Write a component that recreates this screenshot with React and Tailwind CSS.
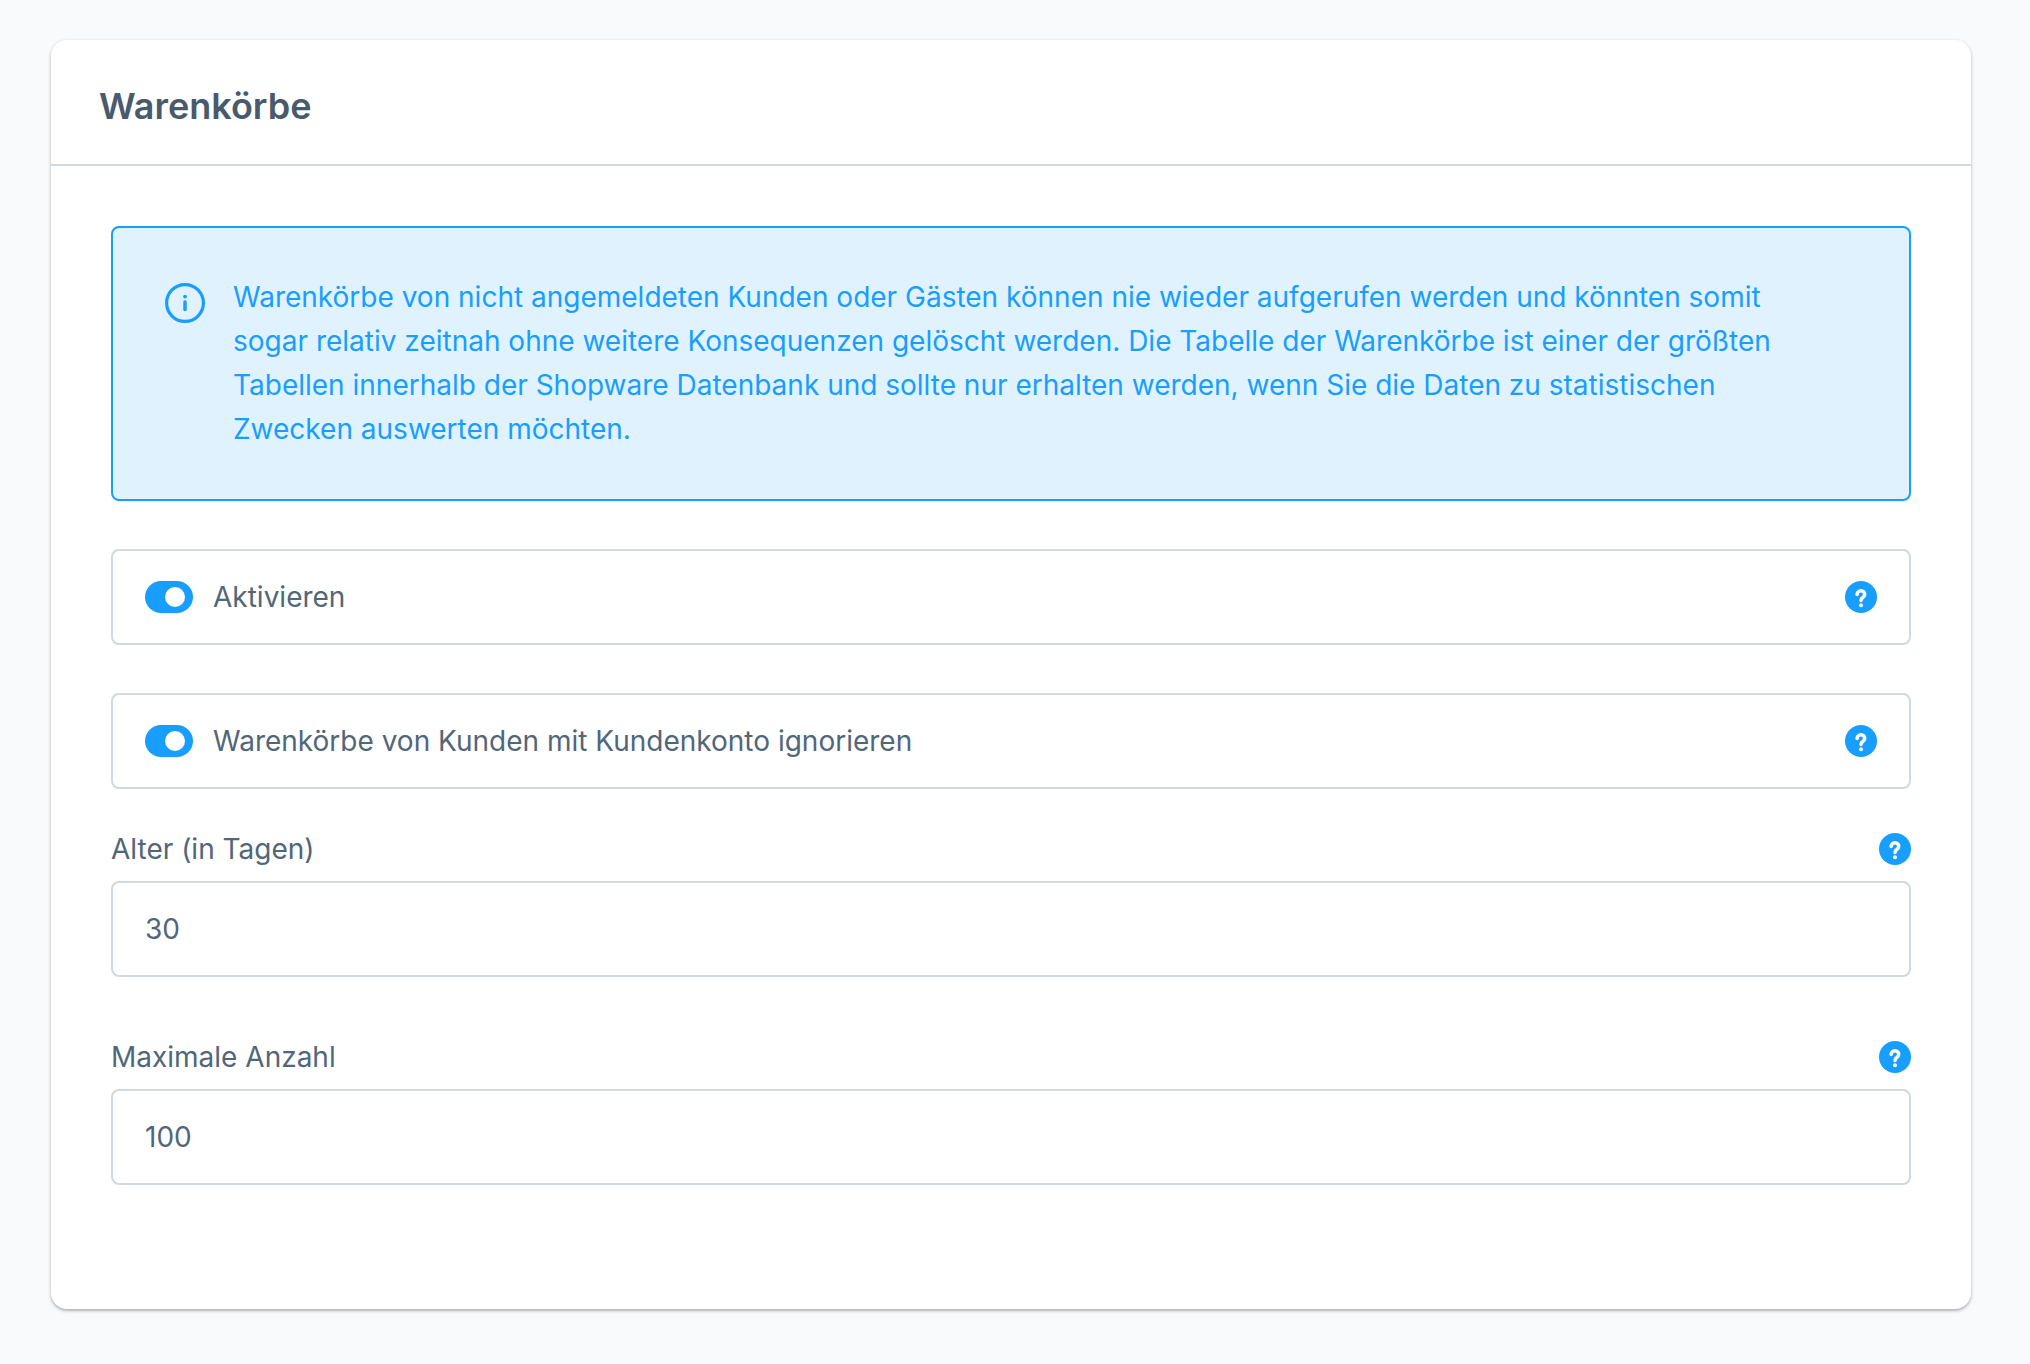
import { useState } from "react";

function HelpButton({ topic }) {
  return (
    <button
      type="button"
      aria-label={`Hilfe: ${topic}`}
      className="size-8 shrink-0 cursor-pointer rounded-full text-[#189eff]"
    >
      <svg viewBox="0 0 32 32" className="block size-8" aria-hidden="true">
        <circle cx="16" cy="16" r="16" fill="currentColor" />
        <path
          d="M12.1 13.6 C12.1 11.4 13.7 9.8 16 9.8 C18.2 9.8 19.7 11.4 19.7 13.3 C19.7 15 18.8 15.9 17.5 16.7 C16.5 17.3 16 17.9 16 19.4"
          fill="none"
          stroke="#fff"
          strokeWidth="3.5"
          strokeLinecap="round"
          strokeLinejoin="round"
        />
        <circle cx="16" cy="24.2" r="2" fill="#fff" />
      </svg>
    </button>
  );
}

function SwitchField({ id, label }) {
  const [checked, setChecked] = useState(true);
  return (
    <div className="flex h-24 items-center rounded-lg border-2 border-[#d1d9e0] px-8">
      <input
        id={id}
        type="checkbox"
        role="switch"
        checked={checked}
        onChange={(event) => setChecked(event.target.checked)}
        className="flex h-8 w-12 shrink-0 cursor-pointer appearance-none items-center rounded-full bg-[#d1d9e0] px-2 before:size-5 before:rounded-full before:bg-white before:content-[''] checked:justify-end checked:bg-[#189eff]"
      />
      <label htmlFor={id} className="grow cursor-pointer pl-5">
        {label}
      </label>
      <HelpButton topic={label} />
    </div>
  );
}

function NumberField({ id, label, initial }) {
  const [value, setValue] = useState(initial);
  return (
    <div className="flex flex-col gap-4">
      <div className="flex h-8 items-center justify-between">
        <label htmlFor={id}>{label}</label>
        <HelpButton topic={label} />
      </div>
      <input
        id={id}
        type="text"
        inputMode="numeric"
        value={value}
        onChange={(event) => setValue(event.target.value)}
        className="h-24 w-full rounded-lg border-2 border-[#d1d9e0] bg-white px-8 outline-none focus:border-[#189eff]"
      />
    </div>
  );
}

export default function App() {
  return (
    <main className="min-h-screen bg-[#f9fafc] pt-10 pr-[59px] pb-14 pl-[51px] font-['Inter',sans-serif] text-[28px] leading-[44px] text-[#52667a] [font-optical-sizing:none]">
      <section className="rounded-2xl bg-white pb-[124px] shadow-[0_2px_2px_rgba(0,0,0,0.14),0_2px_4px_rgba(0,0,0,0.14),0_0_4px_rgba(0,0,0,0.06)]">
        <header className="border-b-2 border-[#d1d9e0] px-12 pt-11 pb-9">
          <h1 className="text-4xl leading-[44px] font-semibold text-[#485a6c]">Warenkörbe</h1>
        </header>
        <div className="px-[60px] pt-[60px]">
          <div
            role="note"
            className="flex items-start gap-7 rounded-lg border-2 border-[#189eff] bg-[#e1f2ff] pt-[47px] pr-[120px] pb-12 pl-[52px] text-[#189eff]"
          >
            <svg viewBox="0 0 40 40" className="mt-2 size-10 shrink-0" aria-hidden="true">
              <circle cx="20" cy="20" r="18.4" fill="none" stroke="currentColor" strokeWidth="3.2" />
              <circle cx="20" cy="13.6" r="1.9" fill="currentColor" />
              <path d="M20 19V26.4" stroke="currentColor" strokeWidth="3.5" strokeLinecap="round" />
            </svg>
            <p>
              Warenkörbe von nicht angemeldeten Kunden oder Gästen können nie wieder aufgerufen werden und könnten somit
              sogar relativ zeitnah ohne weitere Konsequenzen gelöscht werden. Die Tabelle der Warenkörbe ist einer der
              größten Tabellen innerhalb der Shopware Datenbank und sollte nur erhalten werden, wenn Sie die Daten zu
              statistischen Zwecken auswerten möchten.
            </p>
          </div>
          <div className="mt-12 flex flex-col gap-12">
            <SwitchField id="active" label="Aktivieren" />
            <SwitchField id="ignore-customers" label="Warenkörbe von Kunden mit Kundenkonto ignorieren" />
          </div>
          <div className="mt-11 flex flex-col gap-16">
            <NumberField id="age" label="Alter (in Tagen)" initial="30" />
            <NumberField id="limit" label="Maximale Anzahl" initial="100" />
          </div>
        </div>
      </section>
    </main>
  );
}
